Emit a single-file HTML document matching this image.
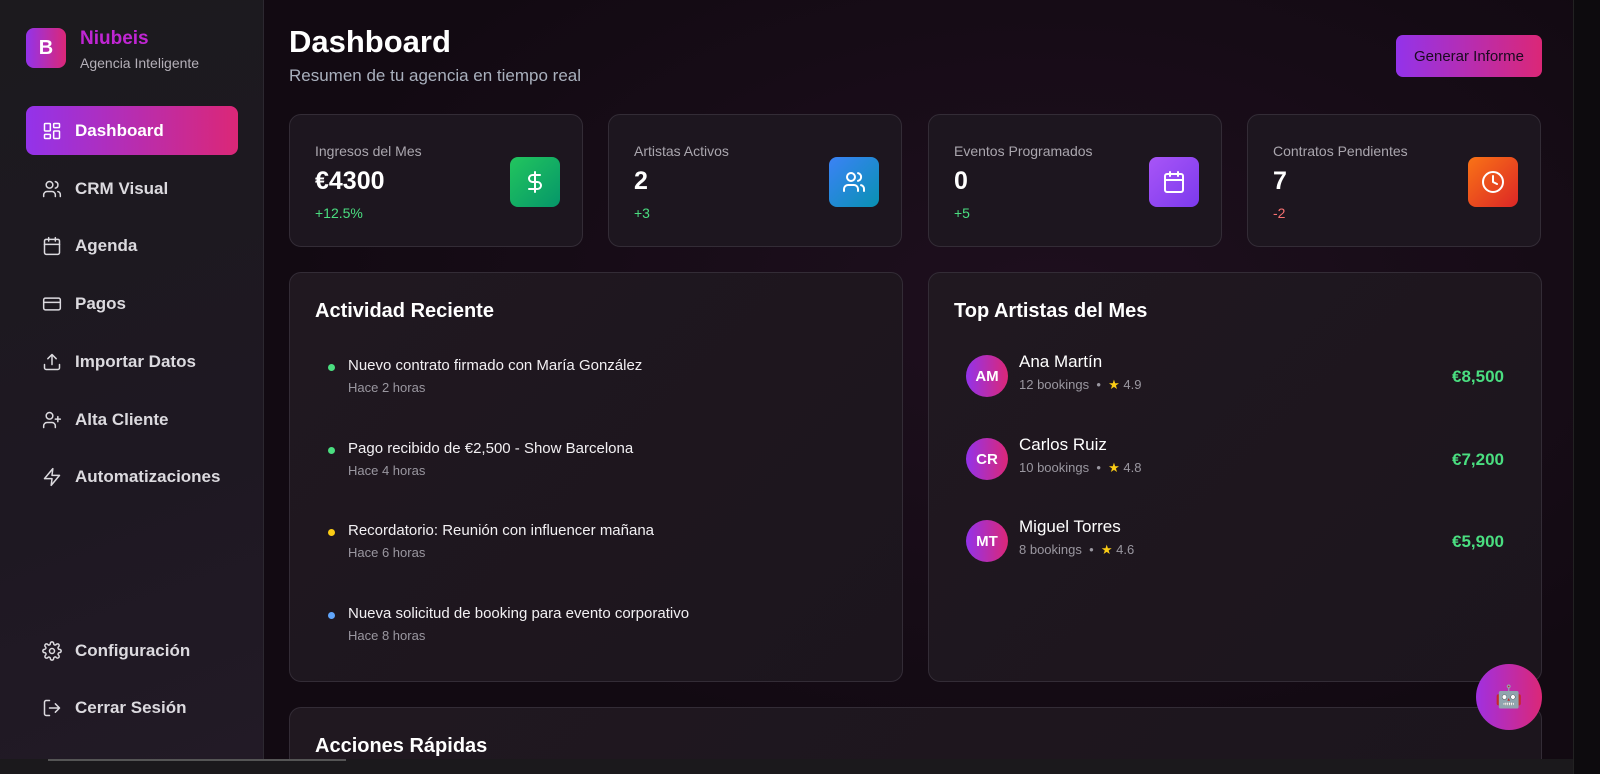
<!DOCTYPE html>
<html style="overflow:hidden;height:774px"><head><meta charset="utf-8"><style>
*{box-sizing:border-box;margin:0;padding:0}
html,body{width:1600px;height:774px;overflow:hidden}
body{font-family:"Liberation Sans",sans-serif;background:#0f0a10;color:#fff;position:relative}
.side{position:absolute;left:0;top:0;width:264px;height:774px;background:linear-gradient(160deg,#1c1a1e,#1e1822 60%,#221a26);border-right:1px solid #2c2830}
.logo{position:absolute;left:26px;top:28px;width:40px;height:40px;border-radius:8px;background:linear-gradient(90deg,#9333ea,#db2777);font-weight:bold;font-size:20px;display:flex;align-items:center;justify-content:center}
.brand{position:absolute;left:80px;top:28px;color:#c026d3;font-weight:bold;font-size:19px}
.sub{position:absolute;left:80px;top:55px;color:#b4b0b8;font-size:14px}
.nav{position:absolute;left:26px;width:212px;height:49px;display:flex;align-items:center;padding-left:16px;font-size:17px;color:#dcdadf;font-weight:bold}
.nav svg{width:20px;height:20px;margin-right:13px;fill:none;stroke:#dcdadf;stroke-width:1.8;stroke-linecap:round;stroke-linejoin:round}
.nav.act{background:linear-gradient(90deg,#9333ea,#db2777);border-radius:8px;color:#fff}
.nav.act svg{stroke:#fff}
.main{position:absolute;left:264px;top:0;width:1309px;height:774px;background:radial-gradient(ellipse at 60% 40%,#1e0f1e,#120a12 70%)}
h1{position:absolute;left:289px;top:24px;font-size:31px;font-weight:bold}
.lead{position:absolute;left:289px;top:66px;font-size:17px;color:#a9b0bd}
.btn{position:absolute;left:1396px;top:35px;width:146px;height:42px;border-radius:7px;background:linear-gradient(90deg,#9333ea,#db2777);color:#1a0a20;font-size:15px;display:flex;align-items:center;justify-content:center}
.card{position:absolute;top:114px;width:294px;height:133px;border:1px solid #332c36;border-radius:12px;background:#1d161f}
.card .l{position:absolute;left:25px;top:28px;font-size:14px;color:#aaa6ae}
.card .v{position:absolute;left:25px;top:52px;font-size:25px;font-weight:bold}
.card .c{position:absolute;left:25px;top:90px;font-size:14px;color:#4ade80}
.card .i{position:absolute;left:220px;top:42px;width:50px;height:50px;border-radius:8px;display:flex;align-items:center;justify-content:center}
.card .i svg{width:24px;height:24px;fill:none;stroke:#fff;stroke-width:2;stroke-linecap:round;stroke-linejoin:round}
.panel{position:absolute;border:1px solid #332c36;border-radius:12px;background:linear-gradient(135deg,#201820,#1c151d)}
.panel h2{position:absolute;left:25px;top:27px;font-size:20px;font-weight:bold}
.act-it{position:absolute;left:58px;font-size:15px;color:#f2f0f3;white-space:nowrap}
.act-it small{display:block;font-size:13px;color:#9a97a0;margin-top:6px}
.dot{position:absolute;left:-20px;top:7px;width:7px;height:7px;border-radius:50%}
.art{position:absolute;left:37px;height:42px}
.av{position:absolute;left:0;top:0;width:42px;height:42px;border-radius:50%;background:linear-gradient(90deg,#9333ea,#db2777);font-weight:bold;font-size:15px;display:flex;align-items:center;justify-content:center}
.an{position:absolute;left:53px;top:-3px;font-size:17px;white-space:nowrap}
.am{position:absolute;left:53px;top:22px;font-size:13px;color:#9a97a0;white-space:nowrap}
.am b{color:#facc15;font-weight:normal}
.amt{position:absolute;right:37px;font-size:17px;color:#4ade80;font-weight:bold}
</style></head><body>
<div class="side">
<div class="logo">B</div><div class="brand">Niubeis</div><div class="sub">Agencia Inteligente</div>
<div class="nav act" style="top:106px"><svg viewBox="0 0 24 24"><rect x="3" y="3" width="7" height="9" rx="1"/><rect x="14" y="3" width="7" height="5" rx="1"/><rect x="14" y="12" width="7" height="9" rx="1"/><rect x="3" y="16" width="7" height="5" rx="1"/></svg>Dashboard</div>
<div class="nav" style="top:164px"><svg viewBox="0 0 24 24"><path d="M16 21v-2a4 4 0 0 0-4-4H6a4 4 0 0 0-4 4v2"/><circle cx="9" cy="7" r="4"/><path d="M22 21v-2a4 4 0 0 0-3-3.9M16 3.1a4 4 0 0 1 0 7.8"/></svg>CRM Visual</div>
<div class="nav" style="top:221px"><svg viewBox="0 0 24 24"><rect x="3" y="4" width="18" height="18" rx="2"/><path d="M16 2v4M8 2v4M3 10h18"/></svg>Agenda</div>
<div class="nav" style="top:279px"><svg viewBox="0 0 24 24"><rect x="2" y="5" width="20" height="14" rx="2"/><path d="M2 10h20"/></svg>Pagos</div>
<div class="nav" style="top:337px"><svg viewBox="0 0 24 24"><path d="M21 15v4a2 2 0 0 1-2 2H5a2 2 0 0 1-2-2v-4M17 8l-5-5-5 5M12 3v12"/></svg>Importar Datos</div>
<div class="nav" style="top:395px"><svg viewBox="0 0 24 24"><path d="M16 21v-2a4 4 0 0 0-4-4H6a4 4 0 0 0-4 4v2"/><circle cx="9" cy="7" r="4"/><path d="M19 8v6M22 11h-6"/></svg>Alta Cliente</div>
<div class="nav" style="top:452px"><svg viewBox="0 0 24 24"><path d="M13 2L3 14h9l-1 8 10-12h-9l1-8z"/></svg>Automatizaciones</div>
<div class="nav" style="top:626px"><svg viewBox="0 0 24 24"><circle cx="12" cy="12" r="3"/><path d="M19.4 15a1.7 1.7 0 0 0 .3 1.8l.1.1a2 2 0 1 1-2.8 2.8l-.1-.1a1.7 1.7 0 0 0-2.9 1.2V21a2 2 0 1 1-4 0v-.1A1.7 1.7 0 0 0 9 19.4a1.7 1.7 0 0 0-1.8.3l-.1.1a2 2 0 1 1-2.8-2.8l.1-.1a1.7 1.7 0 0 0-1.2-2.9H3a2 2 0 1 1 0-4h.1A1.7 1.7 0 0 0 4.6 9a1.7 1.7 0 0 0-.3-1.8l-.1-.1a2 2 0 1 1 2.8-2.8l.1.1a1.7 1.7 0 0 0 2.9-1.2V3a2 2 0 1 1 4 0v.1a1.7 1.7 0 0 0 2.9 1.2l.1-.1a2 2 0 1 1 2.8 2.8l-.1.1a1.7 1.7 0 0 0 1.2 2.9H21a2 2 0 1 1 0 4h-.1a1.7 1.7 0 0 0-1.5 1z"/></svg>Configuración</div>
<div class="nav" style="top:683px"><svg viewBox="0 0 24 24"><path d="M9 21H5a2 2 0 0 1-2-2V5a2 2 0 0 1 2-2h4M16 17l5-5-5-5M21 12H9"/></svg>Cerrar Sesión</div>
</div>
<div class="main"></div>
<div style="position:absolute;left:1573px;top:0;width:27px;height:774px;background:#0d0b0e;border-left:1px solid #222"></div>
<h1>Dashboard</h1><div class="lead">Resumen de tu agencia en tiempo real</div>
<div class="btn">Generar Informe</div>
<div class="card" style="left:289px"><div class="l">Ingresos del Mes</div><div class="v">€4300</div><div class="c">+12.5%</div><div class="i" style="background:linear-gradient(135deg,#22c55e,#059669)"><svg viewBox="0 0 24 24"><path d="M12 2v20M17 5H9.5a3.5 3.5 0 0 0 0 7h5a3.5 3.5 0 0 1 0 7H6"/></svg></div></div>
<div class="card" style="left:608px"><div class="l">Artistas Activos</div><div class="v">2</div><div class="c">+3</div><div class="i" style="background:linear-gradient(135deg,#3b82f6,#0891b2)"><svg viewBox="0 0 24 24"><path d="M16 21v-2a4 4 0 0 0-4-4H6a4 4 0 0 0-4 4v2"/><circle cx="9" cy="7" r="4"/><path d="M22 21v-2a4 4 0 0 0-3-3.9M16 3.1a4 4 0 0 1 0 7.8"/></svg></div></div>
<div class="card" style="left:928px"><div class="l">Eventos Programados</div><div class="v">0</div><div class="c">+5</div><div class="i" style="background:linear-gradient(135deg,#a855f7,#7c3aed)"><svg viewBox="0 0 24 24"><rect x="3" y="4" width="18" height="18" rx="2"/><path d="M16 2v4M8 2v4M3 10h18"/></svg></div></div>
<div class="card" style="left:1247px"><div class="l">Contratos Pendientes</div><div class="v">7</div><div class="c" style="color:#f87171">-2</div><div class="i" style="background:linear-gradient(135deg,#f97316,#dc2626)"><svg viewBox="0 0 24 24"><circle cx="12" cy="12" r="10"/><path d="M12 6v6l4 2"/></svg></div></div>
<div class="panel" style="left:289px;top:272px;width:614px;height:410px"><h2>Actividad Reciente</h2>
<div class="act-it" style="top:84px"><span class="dot" style="background:#4ade80"></span>Nuevo contrato firmado con María González<small>Hace 2 horas</small></div>
<div class="act-it" style="top:167px"><span class="dot" style="background:#4ade80"></span>Pago recibido de €2,500 - Show Barcelona<small>Hace 4 horas</small></div>
<div class="act-it" style="top:249px"><span class="dot" style="background:#facc15"></span>Recordatorio: Reunión con influencer mañana<small>Hace 6 horas</small></div>
<div class="act-it" style="top:332px"><span class="dot" style="background:#60a5fa"></span>Nueva solicitud de booking para evento corporativo<small>Hace 8 horas</small></div>
</div>
<div class="panel" style="left:928px;top:272px;width:614px;height:410px"><h2>Top Artistas del Mes</h2>
<div class="art" style="top:82px"><div class="av">AM</div><div class="an">Ana Martín</div><div class="am">12 bookings &nbsp;•&nbsp; <b>★</b> 4.9</div></div><div class="amt" style="top:94px">€8,500</div>
<div class="art" style="top:165px"><div class="av">CR</div><div class="an">Carlos Ruiz</div><div class="am">10 bookings &nbsp;•&nbsp; <b>★</b> 4.8</div></div><div class="amt" style="top:177px">€7,200</div>
<div class="art" style="top:247px"><div class="av">MT</div><div class="an">Miguel Torres</div><div class="am">8 bookings &nbsp;•&nbsp; <b>★</b> 4.6</div></div><div class="amt" style="top:259px">€5,900</div>
</div>
<div class="panel" style="left:289px;top:707px;width:1253px;height:67px;border-bottom:none;border-radius:12px 12px 0 0"><h2>Acciones Rápidas</h2></div>
<div style="position:absolute;left:0;top:759px;width:1573px;height:15px;background:#1b191c"></div>
<div style="position:absolute;left:48px;top:759px;width:298px;height:2px;background:#555"></div>
<div style="position:absolute;left:1476px;top:664px;width:66px;height:66px;border-radius:50%;background:linear-gradient(90deg,#a030e0,#db2777);display:flex;align-items:center;justify-content:center;font-size:22px">🤖</div>
</body></html>
